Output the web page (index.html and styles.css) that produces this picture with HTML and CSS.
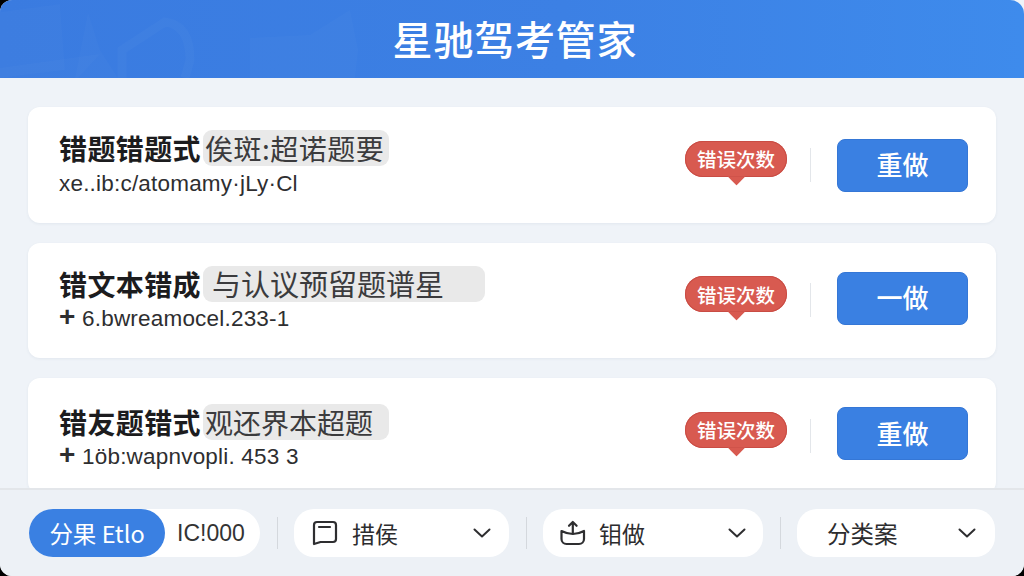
FILE: index.html
```html
<!DOCTYPE html>
<html lang="zh-CN">
<head>
<meta charset="utf-8">
<title>星驰驾考管家</title>
<link rel="stylesheet" href="styles.css">
</head>
<body>
<div class="app">
  <header class="header">
    <svg class="header-art" viewBox="0 0 1024 78" preserveAspectRatio="none" aria-hidden="true">
      <path d="M0 12 L60 4 L65 70 L0 78Z" fill="#fff" opacity=".015"/>
      <path d="M0 68 L100 54 L78 78 L0 78Z" fill="#fff" opacity=".02"/>
      <path d="M88 12 L100 50 L118 78 L75 78Z" fill="#fff" opacity=".015"/>
      <path d="M122 78 L122 50 L165 22 Q190 25 190 60 L185 78" fill="none" stroke="#fff" stroke-width="9" opacity=".025"/>
      <path d="M250 78 L250 38 L310 35 L350 10 L358 50 L355 78Z" fill="#fff" opacity=".02"/>
    </svg>
    <h1 class="app-title">星驰驾考管家</h1>
  </header>

  <main class="list">
    <article class="card card-first">
      <div class="info">
        <div class="title-row"><span class="title">错题错题式</span><span class="chip chip-a">俟斑:超诺题要</span></div>
        <div class="meta">xe..ib:c/atomamy·jLy·Cl</div>
      </div>
      <span class="badge">错误次数</span>
      <span class="vline"></span>
      <button class="redo">重做</button>
    </article>
    <article class="card">
      <div class="info">
        <div class="title-row"><span class="title">错文本错成</span><span class="chip chip-b">与认议预留题谱星</span></div>
        <div class="meta"><b class="plus">+</b>6.bwreamocel.233-1</div>
      </div>
      <span class="badge">错误次数</span>
      <span class="vline"></span>
      <button class="redo">一做</button>
    </article>
    <article class="card card-low">
      <div class="info">
        <div class="title-row"><span class="title">错友题错式</span><span class="chip chip-c">观还界本超题</span></div>
        <div class="meta"><b class="plus">+</b>1öb:wapnvopli. 453 3</div>
      </div>
      <span class="badge">错误次数</span>
      <span class="vline"></span>
      <button class="redo">重做</button>
    </article>
  </main>

  <footer class="footer">
    <div class="pill seg">
      <span class="seg-on">分果 Etlo</span>
      <span class="seg-off">IC!000</span>
    </div>
    <span class="fline"></span>
    <div class="pill pill-2">
      <svg class="ico" viewBox="0 0 26 26" aria-hidden="true"><path d="M2 24V5a3 3 0 0 1 3-3h16a3 3 0 0 1 3 3v14a3 3 0 0 1-3 3H8.500z"/><path d="M7 7h11"/></svg>
      <span class="pill-text">措侯</span>
      <svg class="chev" viewBox="0 0 18 10" aria-hidden="true"><path d="M1.5 1.5 9 8.5 16.5 1.5"/></svg>
    </div>
    <span class="fline"></span>
    <div class="pill pill-3">
      <svg class="ico" viewBox="0 0 26 26" aria-hidden="true"><path d="M1.500 11Q13 17 24 11V19a5 5 0 0 1-5 5H6.500a5 5 0 0 1-5-5z"/><path d="M12.800 13.500V2M9 5.800l3.800-3.800 3.800 3.800"/></svg>
      <span class="pill-text">钼做</span>
      <svg class="chev" viewBox="0 0 18 10" aria-hidden="true"><path d="M1.5 1.5 9 8.5 16.5 1.5"/></svg>
    </div>
    <span class="fline"></span>
    <div class="pill pill-4">
      <span class="pill-text">分类案</span>
      <svg class="chev" viewBox="0 0 18 10" aria-hidden="true"><path d="M1.5 1.5 9 8.5 16.5 1.5"/></svg>
    </div>
  </footer>
</div>
</body>
</html>
```

FILE: styles.css
```css
* { box-sizing: border-box; }
html, body { margin: 0; height: 100%; background: #000; }
body { font-family: "Noto Sans CJK SC", "Liberation Sans", sans-serif; overflow: hidden; }

.app {
  width: 1024px; height: 576px;
  display: flex; flex-direction: column;
  background: #eff3f8;
  border-radius: 12px 0 12px 12px;
  overflow: hidden;
}

.header {
  position: relative;
  flex: 0 0 78px;
  display: flex; align-items: center; justify-content: center;
  padding: 0 0 2px 6px;
  background: linear-gradient(90deg, #3a7be0 0%, #3c80e4 55%, #3e8bec 100%);
  border-top-right-radius: 14px;
}
.header-art { position: absolute; inset: 0; width: 100%; height: 100%; }
.app-title {
  position: relative;
  margin: 0;
  font-size: 40px; font-weight: 500; line-height: 1;
  letter-spacing: .8px;
  color: #fff;
}

.list {
  flex: 1 1 0; min-height: 0;
  overflow: hidden;
  display: flex; flex-direction: column; gap: 20px;
  padding: 29px 28px 0;
}
.card {
  flex: 0 0 115.5px;
  display: flex; align-items: center;
  padding: 0 28px 0 31px;
  background: #fff;
  border-radius: 12px;
  box-shadow: 0 1px 3px rgba(60, 80, 110, .07);
}
.info { flex: 1 1 0; min-width: 0; margin-top: -2px; }
.card-low .info { margin-top: 3px; }
.title-row { display: flex; align-items: center; height: 37px; }
.title { font-size: 28px; font-weight: 700; color: #1c1c1e; line-height: 1; letter-spacing: .4px; }
.chip {
  height: 36px; margin-left: 2px;
  display: flex; align-items: center;
  background: #e9e9e9;
  border-radius: 9px;
  font-size: 28px; color: #3b3b3d; line-height: 1;
  white-space: nowrap;
}
.chip-a { width: 186px; padding-left: 2px; letter-spacing: .5px; }
.chip-b { width: 282px; padding-left: 9px; font-size: 29px; }
.chip-c { width: 186px; padding-left: 2px; }

.meta {
  margin-top: 3px;
  font-family: "Liberation Sans", sans-serif;
  font-size: 22.500px; line-height: 28px; color: #2e2e30;
  letter-spacing: .2px;
  white-space: nowrap;
}
.plus { display: inline-block; width: 23px; font-size: 28px; line-height: 20px; }

.badge {
  position: relative;
  width: 102px; height: 36px; margin-top: -12px;
  display: flex; align-items: center; justify-content: center;
  background: #d85a50;
  border-radius: 18px;
  box-shadow: inset 0 0 0 1px #c94c44;
  font-size: 19.500px; font-weight: 500; line-height: 1; color: #fff;
}
.badge::after {
  content: ""; position: absolute;
  left: 50%; bottom: -6px;
  width: 13px; height: 13px; margin-left: -6px;
  background: #d85a50;
  transform: rotate(45deg);
  clip-path: polygon(100% 0, 100% 100%, 0 100%);
}
.vline { width: 1px; height: 34px; margin: 0 26px 0 23px; background: #e3e6ea; }
.redo {
  width: 131px; height: 53px; padding: 0 0 2px;
  margin-top: -4px;
  background: #3a80e2;
  border: 1px solid #3577d6;
  border-radius: 8px;
  font: 500 26px/1 "Noto Sans CJK SC", sans-serif;
  color: #fff;
}
.card-first .redo { margin-top: 1px; }

.footer {
  position: relative;
  flex: 0 0 88px;
  display: flex; align-items: center; gap: 16px;
  padding: 0 28px 0 29px;
  background: #edf1f6;
  border-top: 2px solid #e3e6ea;
}
.pill {
  flex: none;
  height: 48px;
  display: flex; align-items: center;
  background: #fff;
  border-radius: 20px;
  font-size: 23px; color: #2c2c2e;
}
.seg { width: 231px; border-radius: 24px; }
.seg-on {
  width: 136px; height: 48px;
  display: flex; align-items: center; justify-content: center;
  background: #3a80e2; color: #fff;
  border-radius: 24px;
  font-size: 23.500px;
  white-space: nowrap;
}
.seg-off {
  margin-left: 12px;
  font-family: "Liberation Sans", sans-serif;
  font-size: 23px;
  color: #333;
}
.fline { flex: none; width: 1px; height: 32px; margin-left: 1px; background: #d4d8dd; }
.pill-2 { width: 215px; padding: 0 18px; }
.pill-3 { width: 220px; padding: 0 17px; }
.pill-4 { width: 198px; padding: 0 19px 0 30px; }
.ico { flex: none; width: 26px; height: 26px; fill: none; stroke: #2e2e30; stroke-width: 2.200; stroke-linejoin: round; stroke-linecap: round; }
.pill-2 .pill-text { margin-left: 14px; }
.pill-3 .pill-text { margin-left: 13px; }
.pill-4 .pill-text { font-size: 23.500px; }
.chev { flex: none; width: 18px; height: 10px; margin-left: auto; fill: none; stroke: #2e2e30; stroke-width: 2; stroke-linecap: round; stroke-linejoin: round; }
```
